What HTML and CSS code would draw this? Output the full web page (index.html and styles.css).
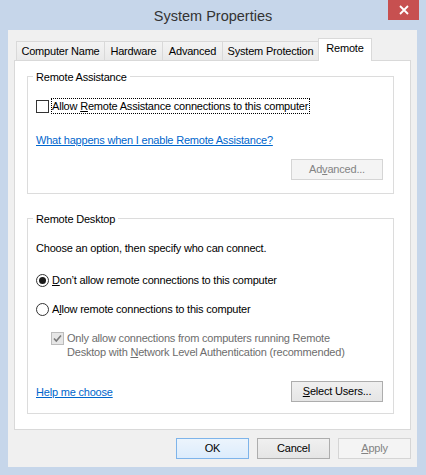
FILE: index.html
```html
<!DOCTYPE html>
<html>
<head>
<meta charset="utf-8">
<title>System Properties</title>
<link rel="stylesheet" href="styles.css">
</head>
<body>
<div class="window">
  <div class="titlebar">
    <span></span>
    <span class="title">System Properties</span>
    <span class="close-cell">
      <span class="close">
        <svg width="10" height="10" viewBox="0 0 10 10"><path d="M1 1L9 9M9 1L1 9" stroke="#fff" stroke-width="1.8"/></svg>
      </span>
    </span>
  </div>
  <div class="client">
    <div class="tabs">
      <span class="tab w-cn">Computer Name</span>
      <span class="tab w-hw">Hardware</span>
      <span class="tab w-adv">Advanced</span>
      <span class="tab w-sp">System Protection</span>
      <span class="tab tab-active w-rm">Remote</span>
    </div>
    <div class="panel">
      <fieldset class="group group-ra">
        <legend>Remote Assistance</legend>
        <div class="row check-row">
          <span class="checkbox"></span>
          <span class="label focus">Allow <u>R</u>emote Assistance connections to this computer</span>
        </div>
        <div class="row link-row">
          <a class="link">What happens when I enable Remote Assistance?</a>
        </div>
        <div class="row btn-row">
          <span class="btn btn-wide disabled">Ad<u>v</u>anced...</span>
        </div>
      </fieldset>
      <fieldset class="group group-rd">
        <legend>Remote Desktop</legend>
        <div class="row text-row">Choose an option, then specify who can connect.</div>
        <div class="row radio-row r1">
          <svg class="radio" width="13" height="13" viewBox="0 0 13 13"><circle cx="6.5" cy="6.5" r="6" fill="#fff" stroke="#333"/><circle cx="6.5" cy="6.5" r="3.5" fill="#1a1a1a"/></svg>
          <span class="label"><u>D</u>on’t allow remote connections to this computer</span>
        </div>
        <div class="row radio-row r2">
          <svg class="radio" width="13" height="13" viewBox="0 0 13 13"><circle cx="6.5" cy="6.5" r="6" fill="#fff" stroke="#333"/></svg>
          <span class="label">A<u>l</u>low remote connections to this computer</span>
        </div>
        <div class="row nla-row">
          <span class="checkbox checked-disabled">
            <svg width="11" height="11" viewBox="0 0 11 11"><path d="M2 5.5L4.3 8L9 2.5" fill="none" stroke="#7a7a7a" stroke-width="1.6"/></svg>
          </span>
          <span class="nla-text disabled-text">Only allow connections from computers running Remote<br>Desktop with <u>N</u>etwork Level Authentication (recommended)</span>
        </div>
        <div class="row help-row">
          <a class="link help-link">Help me choose</a>
          <span class="btn btn-wide"><u>S</u>elect Users...</span>
        </div>
      </fieldset>
    </div>
    <div class="footer">
      <span class="btn btn-std btn-default">OK</span>
      <span class="btn btn-std">Cancel</span>
      <span class="btn btn-std disabled"><u>A</u>pply</span>
    </div>
  </div>
</div>
</body>
</html>
```

FILE: styles.css
```css
* { box-sizing: border-box; }
html, body { margin: 0; padding: 0; }
body {
  font-family: "Liberation Sans", Arial, sans-serif;
  font-size: 11px;
  letter-spacing: -0.2px;
  color: #000;
  background: #c6d6ea;
}
u { text-decoration-thickness: 1px; text-underline-offset: 1px; }
.window {
  width: 426px;
  height: 475px;
  background: #c6d6ea;
  display: flex;
  flex-direction: column;
}
.titlebar {
  height: 30px;
  display: grid;
  grid-template-columns: 1fr auto 1fr;
  align-items: start;
}
.title {
  font-size: 14.5px;
  letter-spacing: 0;
  color: #333;
  line-height: 20px;
  padding-top: 6px;
}
.close-cell {
  display: flex;
  justify-content: flex-end;
  padding-right: 7px;
}
.close {
  width: 31px;
  height: 20px;
  background: #c75050;
  display: flex;
  align-items: center;
  justify-content: center;
}
.client {
  margin: 0 9px 8px 8px;
  flex: 1;
  background: #f0f0f0;
  padding: 8px 6px 0 6px;
}
.tabs {
  display: flex;
  align-items: flex-end;
  height: 22px;
  padding-left: 2px;
}
.tab {
  height: 19px;
  border: 1px solid #d9d9d9;
  border-bottom: none;
  background: linear-gradient(#f3f3f3, #e9e9e9);
  margin-right: -1px;
  display: flex;
  align-items: center;
  justify-content: center;
  line-height: 15px;
  white-space: nowrap;
  padding-top: 1px;
}
.tab-active {
  height: 23px;
  background: #fff;
  margin-bottom: -1px;
  position: relative;
  z-index: 1;
  padding-top: 0;
  padding-bottom: 4px;
}
.w-cn { width: 89px; }
.w-hw { width: 59px; }
.w-adv { width: 61px; }
.w-sp { width: 97px; }
.w-rm { width: 54px; }
.panel {
  background: #fff;
  border: 1px solid #d9d9d9;
  height: 370px;
  padding: 7px 16px 0 12px;
}
.group {
  margin: 0;
  border: 1px solid #dcdcdc;
  padding: 0 10px 13px 8px;
  min-width: 0;
}
.group legend {
  padding: 0 3px;
  margin-left: -3px;
  line-height: 16px;
  padding-top: 1px;
}
.group-rd { margin-top: 16px; padding-bottom: 11px; }
.row { display: flex; align-items: center; }
.check-row { margin-top: 13px; height: 16px; }
.checkbox {
  width: 13px;
  height: 13px;
  border: 1px solid #333;
  background: #fff;
  flex: none;
  display: flex;
  align-items: center;
  justify-content: center;
}
.label { line-height: 14px; white-space: nowrap; }
.focus {
  margin-left: 2px;
  border: 1px dotted #000;
  padding-right: 1px;
}
.link-row { margin-top: 19px; height: 15px; }
.link {
  color: #0066cc;
  text-decoration: underline;
  text-decoration-thickness: 1px;
  text-underline-offset: 1px;
  line-height: 15px;
}
.btn-row { margin-top: 11px; justify-content: flex-end; }
.btn {
  height: 21px;
  border: 1px solid #adadad;
  background: linear-gradient(#f0f0f0, #e5e5e5);
  display: flex;
  align-items: center;
  justify-content: center;
  line-height: 15px;
}
.btn-wide { width: 92px; }
.btn-std { width: 73px; }
.btn.disabled {
  color: #838383;
  background: #f4f4f4;
  border-color: #d5d5d5;
}
.btn-default {
  border-color: #7eb4ea;
  background: linear-gradient(#ecf4fc, #dcecfc);
}
.text-row { margin-top: 14px; height: 15px; line-height: 15px; }
.radio-row { height: 16px; }
.r1 { margin-top: 16px; }
.r2 { margin-top: 13px; }
.radio { flex: none; margin-right: 3px; }
.nla-row {
  margin-top: 14px;
  align-items: flex-start;
  padding-left: 15px;
}
.checked-disabled {
  border-color: #bcbcbc;
  background: #e6e6e6;
  margin-top: 1px;
}
.nla-text {
  margin-left: 3px;
  line-height: 14px;
  white-space: nowrap;
}
.disabled-text { color: #6d6d6d; }
.help-row {
  margin-top: 22px;
  justify-content: space-between;
}
.help-link { padding-top: 2px; }
.footer {
  display: flex;
  justify-content: flex-end;
  gap: 8px;
  margin-top: 8px;
}
```
